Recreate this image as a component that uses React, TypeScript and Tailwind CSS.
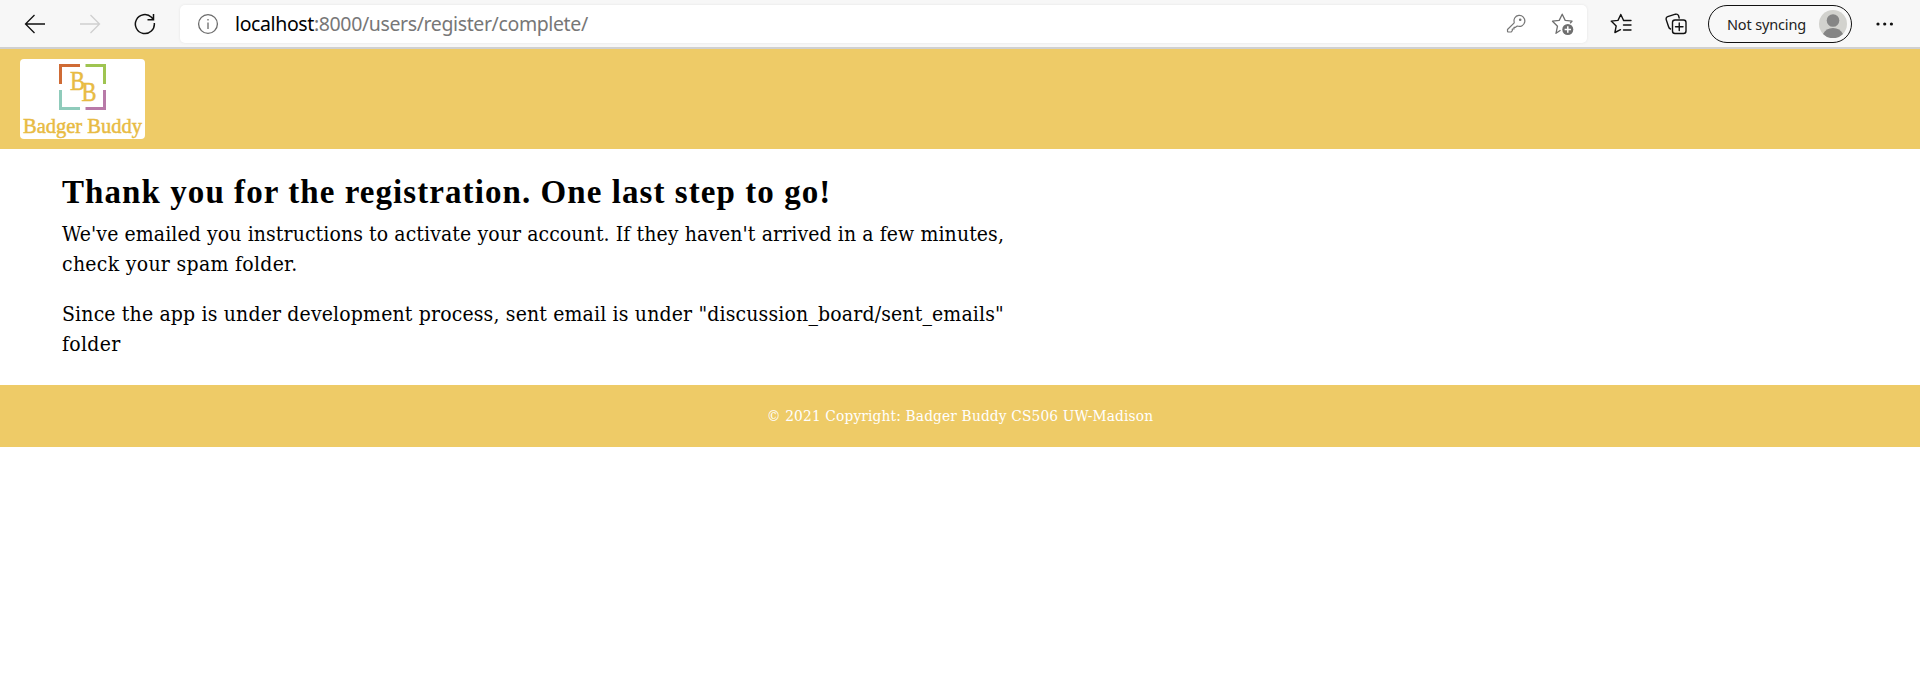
import React from "react";

function BrowserBar() {
  return (
    <div className="flex h-[49px] items-center border-b-2 border-[#d0d0d0] bg-[#f7f7f7]">
      <svg className="ml-[24px] h-[22px] w-[22px] shrink-0" viewBox="0 0 22 22" fill="none" stroke="#111" strokeWidth="1.3">
        <path d="M21 11H1.5M10.5 2L1.5 11l9 9" />
      </svg>
      <svg className="ml-[33px] h-[22px] w-[22px] shrink-0" viewBox="0 0 22 22" fill="none" stroke="#cfcfcf" strokeWidth="1.3">
        <path d="M1 11h19.5M11.500 2l9 9-9 9" />
      </svg>
      <svg className="ml-[33px] h-[22px] w-[22px] shrink-0" viewBox="0 0 22 22" fill="none" stroke="#111" strokeWidth="1.5">
        <path d="M20.300 10A9.500 9.500 0 1 1 17.500 4.300L19.500 6.700M19.500 1v5.800h-6" />
      </svg>
      <div className="ml-[24px] flex h-[38px] w-[1407px] shrink-0 items-center rounded-[5px] bg-white shadow-[0_0_3px_rgba(0,0,0,0.08)]">
        <svg className="ml-[16.5px] h-[22px] w-[22px] shrink-0" viewBox="0 0 22 22" fill="none" stroke="#6b6b6b" strokeWidth="1.3">
          <circle cx="11" cy="11" r="9.400" />
          <path d="M11 9.500v6.500M11 6v1.500" />
        </svg>
        <span className="ml-[16.5px] whitespace-nowrap font-['Noto_Sans',sans-serif] text-[19.5px] leading-[26px] tracking-[-0.38px] text-[#777]">
          <span className="text-black">localhost</span>:8000/users/register/complete/
        </span>
        <svg className="ml-auto h-[20px] w-[20px] shrink-0" viewBox="0 0 20 20" fill="none" stroke="#767676" strokeWidth="1.2" strokeLinejoin="round">
          <path d="M8.200 8.800A5.500 5.500 0 1 1 11.300 12L9.500 13.300H8V15H6.300v1.700l-1 1.300H2.500Q1.500 18 1.500 17V15.500z" />
          <circle cx="14.200" cy="5.800" r="0.700" fill="#767676" />
        </svg>
        <svg className="ml-[25px] mr-[12px] h-[24px] w-[24px] shrink-0" viewBox="0 0 24 24" fill="none" stroke="#6f6f6f" strokeWidth="1.3" strokeLinejoin="round">
          <path d="M9.500 18.300L5 21.300l1.500-7.100-5-5 6.700-.8L11.200 2.200l3 6.200 6.800.8-1.900 2" />
          <circle cx="16.800" cy="17.500" r="5.500" fill="#6f6f6f" stroke="none" />
          <path d="M16.800 14.300v6.400M13.600 17.500H20" stroke="white" strokeWidth="1.500" />
        </svg>
      </div>
      <svg className="ml-[23px] h-[22px] w-[22px] shrink-0" viewBox="0 0 22 22" fill="none" stroke="#111" strokeWidth="1.4" strokeLinejoin="round" strokeLinecap="round">
        <path d="M13.500 7.200L10.800 1.500 8 7.400 1.200 8.100 6.200 12.900 4.900 19.500 10.500 16.700M13.500 7.500h7.500M13.500 12H21M13.500 17H21" />
      </svg>
      <svg className="ml-[33px] h-[22px] w-[22px] shrink-0" viewBox="0 0 22 22" fill="none" stroke="#111" strokeWidth="1.4" strokeLinecap="round">
        <path d="M5.500 16Q4 15.500 3.500 13.500L1.200 6.600Q.7 4.500 2.700 3.700L10.500 1.200Q12.700.7 13.500 2.600L14.200 5" />
        <rect x="7.500" y="7" width="13.500" height="13.500" rx="2.500" />
        <path d="M14.250 10v7.500M10.500 13.750H18" />
      </svg>
      <div className="ml-[21px] flex h-[38px] w-[144px] shrink-0 items-center rounded-full border-[1.5px] border-[#111] bg-white/20">
        <span className="ml-[18px] whitespace-nowrap font-['Noto_Sans',sans-serif] text-[14.5px] leading-5 tracking-[-0.15px] text-[#222]">Not syncing</span>
        <svg className="ml-auto mr-[4px] h-[28px] w-[28px] shrink-0" viewBox="0 0 28 28">
          <circle cx="14" cy="14" r="14" fill="#d2d2ce" />
          <circle cx="14" cy="10.500" r="6.300" fill="#858585" />
          <path d="M4 24Q7 18 14 18t10 6A14 14 0 0 1 4 24" fill="#858585" />
        </svg>
      </div>
      <svg className="ml-[23px] h-[6px] w-[20px] shrink-0" viewBox="0 0 20 6" fill="#111">
        <circle cx="3" cy="3" r="1.600" />
        <circle cx="9.700" cy="3" r="1.600" />
        <circle cx="16.400" cy="3" r="1.600" />
      </svg>
    </div>
  );
}

function Logo() {
  return (
    <svg className="h-[80px] w-[125px] rounded-[4px] bg-white" viewBox="0 0 125 80" fill="none" strokeWidth="3">
      <path d="M40.500 25V6.500H60" stroke="#cf6b35" />
      <path d="M65.500 6.500H84.500V25" stroke="#9fc451" />
      <path d="M40.500 31V49.500H60" stroke="#8fcbbb" />
      <path d="M65.500 49.500H84.500V31" stroke="#b87aa8" />
      <g fill="#e8bb43" stroke="#e8bb43" strokeWidth="0.5" fontFamily="'Liberation Serif', serif">
        <text x="50" y="30.500" fontSize="27" textLength="15" lengthAdjust="spacingAndGlyphs">B</text>
        <text x="61.500" y="42" fontSize="27" textLength="15" lengthAdjust="spacingAndGlyphs">B</text>
        <text x="3" y="74" fontSize="21" textLength="119" lengthAdjust="spacingAndGlyphs">Badger Buddy</text>
      </g>
    </svg>
  );
}

export default function App() {
  return (
    <div className="min-h-[685px] w-full bg-white font-['DejaVu_Serif_Condensed','DejaVu_Serif',serif] text-black [font-stretch:condensed]">
      <BrowserBar />
      <header className="flex h-[100px] items-center bg-[#eecb67] pl-[20px]">
        <Logo />
      </header>
      <main className="h-[236px] whitespace-nowrap pl-[62px] pt-[22px]">
        <h1 className="font-['Liberation_Serif',serif] text-[33px] font-bold leading-[42px] tracking-[1.07px]">Thank you for the registration. One last step to go!</h1>
        <p className="mt-[6px] text-[21px] leading-[30px] tracking-[0.1px]">
          We've emailed you instructions to activate your account. If they haven't arrived in a few minutes,
          <br />
          <span className="tracking-[0.3px]">check your spam folder.</span>
        </p>
        <p className="mt-[20px] text-[21px] leading-[30px] tracking-[0.16px]">
          Since the app is under development process, sent email is under "discussion_board/sent_emails"
          <br />
          <span className="tracking-[0.3px]">folder</span>
        </p>
      </main>
      <footer className="flex h-[62px] items-center justify-center bg-[#eecb67] text-[15.3px] leading-6 tracking-[0.15px] text-white">
        © 2021 Copyright: Badger Buddy CS506 UW-Madison
      </footer>
    </div>
  );
}
